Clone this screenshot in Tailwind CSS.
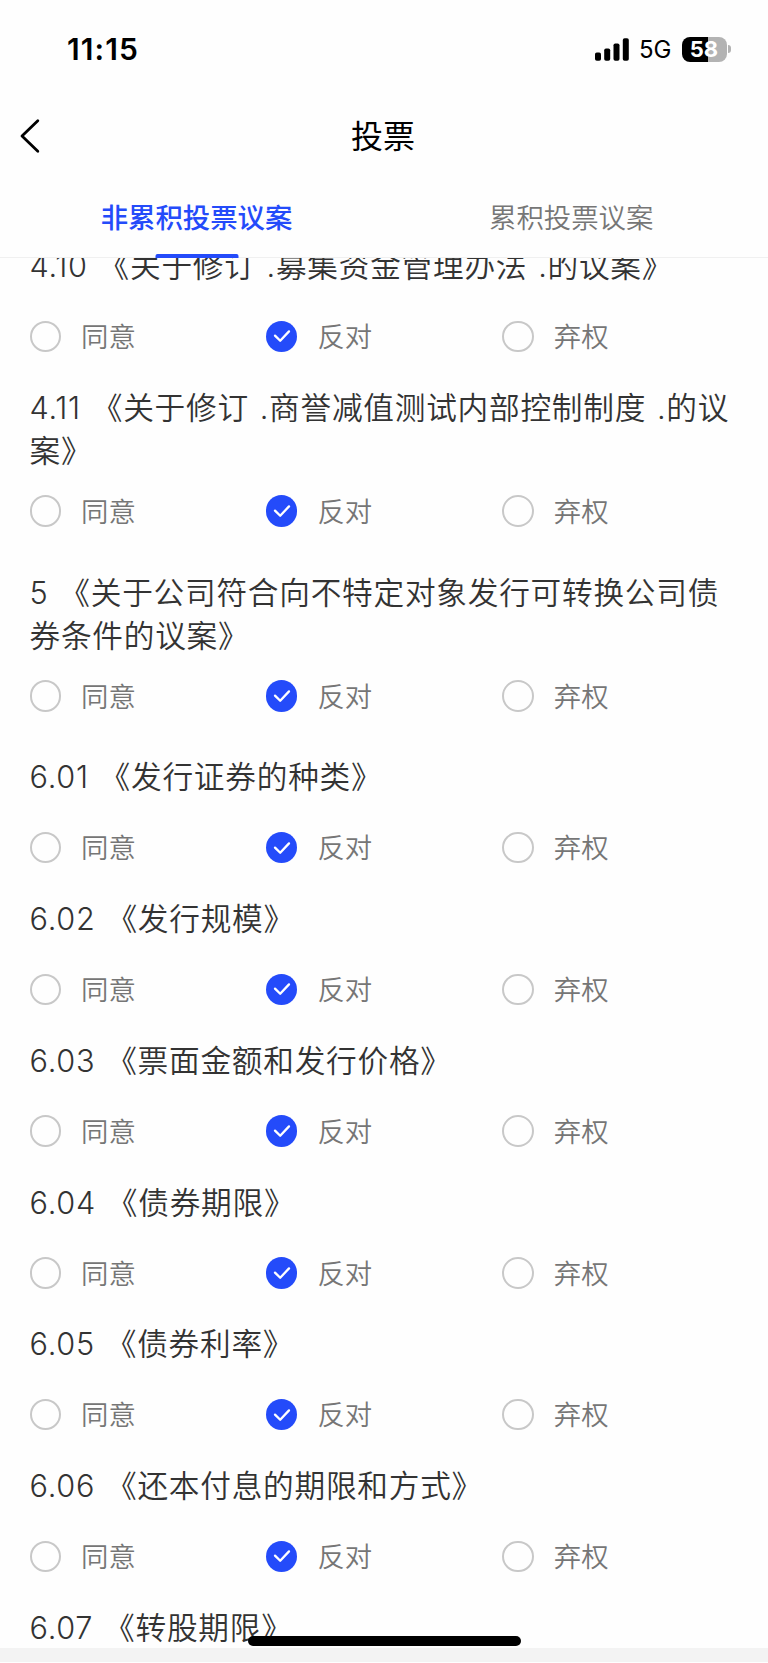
<!DOCTYPE html>
<html lang="zh-CN">
<head>
  <meta charset="UTF-8">
  <meta name="viewport" content="width=device-width, initial-scale=1.0">
  <title>投票</title>
  <!-- Tailwind CSS CDN -->
  <script src="https://cdn.jsdelivr.net/npm/@tailwindcss/browser@4"></script>
</head>
<body class="bg-[#fefefe] font-['Inter','Noto_Sans_CJK_SC',sans-serif]">
  <div class="relative flex flex-col h-[1663px] overflow-hidden">
    <!-- Status bar -->
    <div class="flex items-center justify-between h-[98px] shrink-0 pl-[67px] pr-[37px]">
      <span class="text-[30px] leading-none font-semibold tracking-[1.1px]">11:15</span>
      <div class="flex items-center">
        <svg class="w-[34px] h-[23px]" viewBox="0 0 34 23" fill="currentColor">
          <rect x="0" y="14.5" width="6" height="8.3" rx="1.8" />
          <rect x="9.2" y="10.5" width="6" height="12.3" rx="1.8" />
          <rect x="18.5" y="5.5" width="6" height="17.3" rx="1.8" />
          <rect x="27.8" y="0.3" width="6" height="22.5" rx="1.8" />
        </svg>
        <span class="ml-[10.5px] mt-[2px] w-[32px] text-[24px] leading-none">5G</span>
        <div class="ml-[10.5px] flex items-center">
          <div class="flex items-center justify-center w-[45px] h-[25px] rounded-[8px] bg-linear-to-r from-black from-58% to-[#b3b3b3] to-58% text-white text-[22px] leading-none font-bold">58</div>
          <div class="ml-[1.5px] w-[3px] h-[8px] rounded-r-full bg-[#b3b3b3]"></div>
        </div>
      </div>
    </div>

    <!-- Nav bar -->
    <header class="grid grid-cols-3 items-center h-[76px] shrink-0">
      <button class="ml-[20px] w-[21px]">
        <svg class="w-[21px] h-[36px]" viewBox="0 0 21 36" fill="none" stroke="currentColor" stroke-width="2.8" stroke-linecap="round" stroke-linejoin="round">
          <path d="M17.8 2.8L2 18l15.8 15.2" />
        </svg>
      </button>
      <h1 class="pt-px pr-[2px] text-center text-[32px] leading-none">投票</h1>
    </header>

    <!-- Tabs -->
    <nav class="grid grid-cols-[394px_1fr] h-[84px] shrink-0 border-b border-[#f0f0f0] text-[27.4px] leading-none">
      <a class="relative flex items-center justify-center text-[#244bfa] font-medium pt-[6px] pr-px">
        非累积投票议案
        <span class="absolute bottom-[-1px] left-1/2 -translate-x-1/2 w-[83px] h-[4px] rounded-t-[2px] bg-[#244bfa]"></span>
      </a>
      <a class="flex items-center pt-[6px] pl-[95px] text-[#767676] font-[350]">累积投票议案</a>
    </nav>

    <!-- Proposals -->
    <main class="flex-1 min-h-0 overflow-hidden">
      <div id="voteList" class="-mt-[14px] flex flex-col gap-[10px] pl-[29.5px]"></div>
    </main>

    <div class="h-[14px] mb-px shrink-0 bg-[#f3f3f3]"></div>

    <!-- Home indicator -->
    <div class="absolute left-[248px] top-[1636px] w-[273px] h-[10px] rounded-full bg-black"></div>
  </div>

  <script>
    const groups = [
      [
        { no: '4.10', lines: ['《关于修订 .募集资金管理办法 .的议案》'] },
        { no: '4.11', lines: ['《关于修订 .商誉减值测试内部控制制度 .的议', '案》'] },
      ],
      [
        { no: '5', lines: ['《关于公司符合向不特定对象发行可转换公司债', '券条件的议案》'] },
      ],
      [
        { no: '6.01', lines: ['《发行证券的种类》'] },
        { no: '6.02', lines: ['《发行规模》'] },
        { no: '6.03', lines: ['《票面金额和发行价格》'] },
        { no: '6.04', lines: ['《债券期限》'] },
        { no: '6.05', lines: ['《债券利率》'] },
        { no: '6.06', lines: ['《还本付息的期限和方式》'] },
        { no: '6.07', lines: ['《转股期限》'] },
      ],
    ];

    const radioOff = '<span class="w-[31.5px] h-[31.5px] rounded-full border-2 border-[#c8c8c8]"></span>';
    const radioOn = `
      <span class="flex items-center justify-center w-[31.5px] h-[31.5px] rounded-full bg-[#244bfa]">
        <svg class="w-[18px] h-[14px]" viewBox="0 0 18 14" fill="none" stroke="white" stroke-width="2.3" stroke-linecap="round" stroke-linejoin="round">
          <path d="M2 6.6l5.2 5.2L16 2.4" />
        </svg>
      </span>`;

    function option(label, checked) {
      return `
        <label class="flex items-center gap-[20px] w-[236.4px]">
          ${checked ? radioOn : radioOff}
          <span class="pt-[3px] text-[27.4px] leading-none text-[#767676] font-[350]">${label}</span>
        </label>`;
    }

    function proposal(item) {
      const gap = item.lines.length > 1 ? 'mb-[22.5px]' : 'mb-[33px]';
      return `
        <section class="pb-[33.75px]">
          <h3 class="${gap} text-[30.7px] leading-[43.5px] tracking-[0.73px] [word-spacing:1.5px] text-[#333] font-[350] whitespace-nowrap">${item.no} ${item.lines.join('<br>')}</h3>
          <div class="flex h-[31.5px]">
            ${option('同意', false)}
            ${option('反对', true)}
            ${option('弃权', false)}
          </div>
        </section>`;
    }

    document.getElementById('voteList').innerHTML =
      groups.map(g => `<div>${g.map(proposal).join('')}</div>`).join('');
  </script>
</body>
</html>
